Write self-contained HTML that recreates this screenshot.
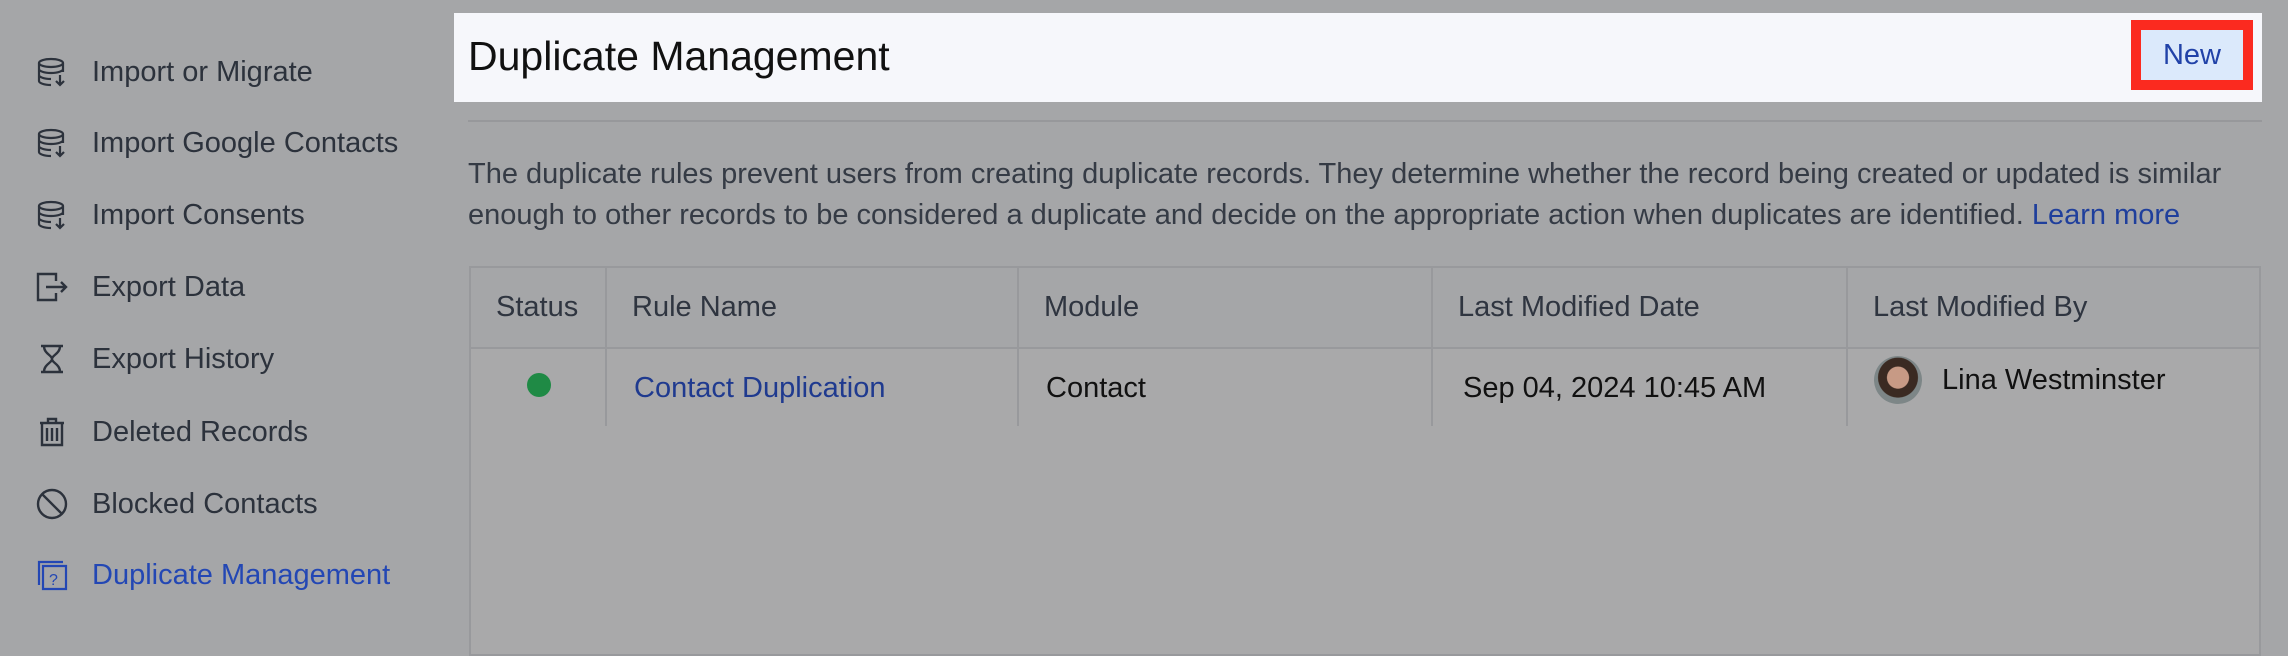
<!DOCTYPE html>
<html><head><meta charset="utf-8"><style>
*{margin:0;padding:0;box-sizing:border-box}
body{width:2288px;height:650px;background:#a5a6a8;font-family:"Liberation Sans",sans-serif;position:relative;overflow:hidden;color:#2c323c}
.side{position:absolute;left:0;top:0}
.item{position:absolute;left:36px;height:40px;display:flex;align-items:center;font-size:29px;white-space:nowrap}
.item svg{width:32px;height:32px;margin-right:24px;flex:none}
.item.act{color:#2347b4}
.hdr{position:absolute;left:454px;top:13px;width:1808px;height:89px;background:#f6f7fb}
.hdr h1{position:absolute;left:14px;top:20px;font-size:41px;font-weight:normal;color:#111}
.btn{position:absolute;left:1677px;top:7px;width:122px;height:70px;border:10px solid #fb2a1f;background:#dbe9fb;color:#2142a8;font-size:29px;text-align:center;line-height:50px}
.sep{position:absolute;left:468px;top:120px;width:1794px;height:2px;background:#97989b}
.desc{position:absolute;left:468px;top:154px;width:1800px;font-size:29px;line-height:41px;color:#353b45}
.desc a{color:#1f3f9c;text-decoration:none}
table{position:absolute;left:469px;top:266px;width:1792px;border-collapse:collapse;font-size:29px}
td,th{border:2px solid #98999c;text-align:left;font-weight:normal}
th{height:81px;background:#a5a6a8;padding-left:25px;color:#2f3540}
td{height:80px;background:#a9a9aa;padding-left:27px;color:#111}
.empty{position:absolute;left:469px;top:426px;width:1792px;height:230px;background:#a9a9aa;border:2px solid #98999c;border-top:none}
</style></head><body>
<div class="side">
<div class="item" style="top:52px"><svg viewBox="0 0 32 32" fill="none" stroke="#2c323c" stroke-width="2.2"><ellipse cx="15" cy="7" rx="12" ry="4"/><path d="M3 7v18c0 2 5 4 12 4M27 7v9M3 13c0 2 5 4 12 4s12-2 12-4M3 19c0 2 5 4 12 4"/><path d="M24 19v10M20 25l4 4 4-4"/></svg>Import or Migrate</div>
<div class="item" style="top:123px"><svg viewBox="0 0 32 32" fill="none" stroke="#2c323c" stroke-width="2.2"><ellipse cx="15" cy="7" rx="12" ry="4"/><path d="M3 7v18c0 2 5 4 12 4M27 7v9M3 13c0 2 5 4 12 4s12-2 12-4M3 19c0 2 5 4 12 4"/><path d="M24 19v10M20 25l4 4 4-4"/></svg>Import Google Contacts</div>
<div class="item" style="top:195px"><svg viewBox="0 0 32 32" fill="none" stroke="#2c323c" stroke-width="2.2"><ellipse cx="15" cy="7" rx="12" ry="4"/><path d="M3 7v18c0 2 5 4 12 4M27 7v9M3 13c0 2 5 4 12 4s12-2 12-4M3 19c0 2 5 4 12 4"/><path d="M24 19v10M20 25l4 4 4-4"/></svg>Import Consents</div>
<div class="item" style="top:267px"><svg viewBox="0 0 32 32" fill="none" stroke="#2c323c" stroke-width="2.4"><path d="M20 10V3H2v26h18v-7M10 16h20M25 11l5 5-5 5"/></svg>Export Data</div>
<div class="item" style="top:339px"><svg viewBox="0 0 32 32" fill="none" stroke="#2c323c" stroke-width="2.4"><path d="M5 3h22M5 29h22M8 3c0 8 8 9 8 13s-8 5-8 13M24 3c0 8-8 9-8 13s8 5 8 13"/></svg>Export History</div>
<div class="item" style="top:412px"><svg viewBox="0 0 32 32" fill="none" stroke="#2c323c" stroke-width="2.4"><path d="M4 7h24M12 7V3h8v4M6 7v22h20V7M11 12v13M16 12v13M21 12v13"/></svg>Deleted Records</div>
<div class="item" style="top:484px"><svg viewBox="0 0 32 32" fill="none" stroke="#2c323c" stroke-width="2.4"><circle cx="16" cy="16" r="14"/><path d="M6 6l20 20"/></svg>Blocked Contacts</div>
<div class="item act" style="top:555px"><svg viewBox="0 0 32 32" fill="none" stroke="#2347b4" stroke-width="2.2"><path d="M3 26V3h24"/><path d="M7 7h23v23H7z"/><text x="13" y="26" font-size="16" fill="#2347b4" stroke="none" font-family="Liberation Sans">?</text></svg>Duplicate Management</div>
</div>
<div class="hdr"><h1>Duplicate Management</h1><div class="btn">New</div></div>
<div class="sep"></div>
<div class="desc">The duplicate rules prevent users from creating duplicate records. They determine whether the record being created or updated is similar<br>enough to other records to be considered a duplicate and decide on the appropriate action when duplicates are identified. <a>Learn more</a></div>
<table>
<tr><th style="width:136px;padding-left:25px">Status</th><th style="width:412px">Rule Name</th><th style="width:414px">Module</th><th style="width:415px">Last Modified Date</th><th>Last Modified By</th></tr>
<tr><td style="padding-left:56px"><span style="display:inline-block;width:24px;height:24px;border-radius:50%;background:#1f8a45"></span></td><td style="color:#1f3a8f">Contact Duplication</td><td>Contact</td><td style="padding-left:30px">Sep 04, 2024 10:45 AM</td><td style="padding-left:26px"><span style="display:inline-flex;align-items:center;margin-top:-8px"><span style="width:48px;height:48px;border-radius:50%;background:radial-gradient(circle at 50% 45%,#c79a85 0 30%,#3a2a22 32% 55%,#7d8687 57%);margin-right:20px"></span>Lina Westminster</span></td></tr>
</table>
<div class="empty"></div>
</body></html>
